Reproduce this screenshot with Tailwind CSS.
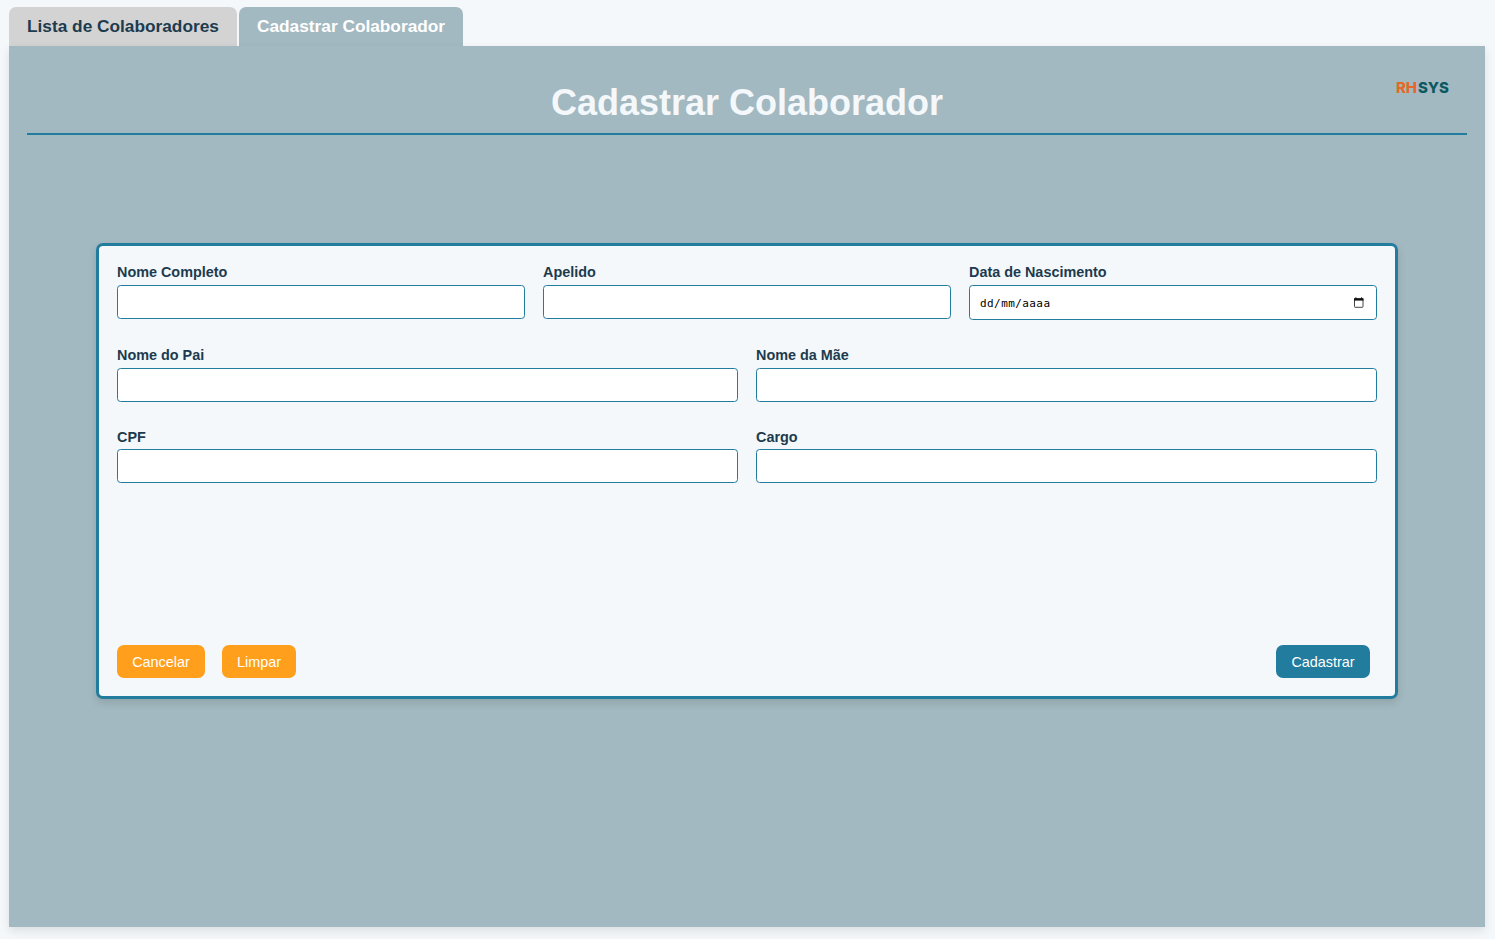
<!DOCTYPE html>
<html lang="pt-BR">
<head>
<meta charset="utf-8">
<title>Cadastrar Colaborador</title>
<script src="https://cdn.jsdelivr.net/npm/@tailwindcss/browser@4"></script>
</head>
<body class="h-screen overflow-hidden bg-[#f4f8fb] pt-[7px] pr-[10px] pb-3 pl-[9px] font-['Liberation_Sans',Arial,sans-serif] text-[#1d3b4e] flex flex-col">
  <nav class="flex gap-[2px] h-[39px] shrink-0 text-[17.28px] font-bold">
    <button class="w-[228px] pl-[18px] text-left whitespace-nowrap rounded-t-[7px] bg-[#d3d3d3]">Lista de Colaboradores</button>
    <button class="w-[224px] pl-[18px] text-left whitespace-nowrap rounded-t-[7px] bg-[#a3b9c1] text-white">Cadastrar Colaborador</button>
  </nav>
  <main class="flex-1 bg-[#a3b9c1] px-[18px] shadow-[0_4px_9px_rgba(0,0,0,0.1)]">
    <header class="relative h-[89px] border-b-2 border-[#227c9d] flex justify-center pt-9">
      <h1 class="text-[36px] leading-[41px] font-bold text-[#f4f8fb]">Cadastrar Colaborador</h1>
      <div class="absolute right-[18px] top-8 w-[53px] h-5 leading-5 text-[15px] font-extrabold font-['Inter',sans-serif] tracking-[-0.1px] text-[#0b5860] whitespace-nowrap"><span class="text-[#e4682a] mr-px">RH</span>SYS</div>
    </header>
    <form class="mt-[108px] mx-auto w-[1302px] h-[456px] rounded-[7px] border-3 border-[#227c9d] bg-[#f4f8fb] px-[18px] pt-[18px] pb-[18px] flex flex-col shadow-[0_4px_9px_rgba(0,0,0,0.12)] text-[14.4px] font-bold">
      <div class="grid grid-cols-3 gap-[18px] h-[83px]">
        <label class="block leading-[17px]"><span class="block h-[21px]">Nome Completo</span><input class="block w-full h-[34px] rounded-[3.6px] border border-[#227c9d] bg-white"></label>
        <label class="block leading-[17px]"><span class="block h-[21px]">Apelido</span><input class="block w-full h-[34px] rounded-[3.6px] border border-[#227c9d] bg-white"></label>
        <div class="leading-[17px]"><span class="block h-[21px]">Data de Nascimento</span>
          <div class="flex items-center justify-between h-[35px] rounded-[3.6px] border border-[#227c9d] bg-white pl-[10px] pr-3 text-black">
            <span class="pt-0.5 font-['DejaVu_Sans_Mono',monospace] font-normal text-[11px] tracking-[0.42px]">dd/mm/aaaa</span>
            <svg class="w-[11px] h-[11px]" viewBox="0 0 11 11" fill="none"><rect x="1.5" y="2" width="8.5" height="8.3" rx=".6" stroke="#444"/><path d="M1 1.2h9.5V3.6H1z" fill="#111"/><path d="M2.9 .3v2M8.6 .3v2" stroke="#111"/></svg>
          </div>
        </div>
      </div>
      <div class="grid grid-cols-2 gap-[18px] h-[82px]">
        <label class="block leading-[17px]"><span class="block h-[21px]">Nome do Pai</span><input class="block w-full h-[34px] rounded-[3.6px] border border-[#227c9d] bg-white"></label>
        <label class="block leading-[17px]"><span class="block h-[21px]">Nome da Mãe</span><input class="block w-full h-[34px] rounded-[3.6px] border border-[#227c9d] bg-white"></label>
      </div>
      <div class="grid grid-cols-2 gap-[18px]">
        <label class="block leading-[17px]"><span class="block h-5">CPF</span><input class="block w-full h-[34px] rounded-[3.6px] border border-[#227c9d] bg-white"></label>
        <label class="block leading-[17px]"><span class="block h-5">Cargo</span><input class="block w-full h-[34px] rounded-[3.6px] border border-[#227c9d] bg-white"></label>
      </div>
      <div class="mt-auto flex gap-[17px] pr-[7px] font-normal text-white">
        <button type="button" class="w-[88px] h-[33px] pt-0.5 rounded-[7px] bg-[#ff9f1c]">Cancelar</button>
        <button type="button" class="w-[74px] h-[33px] pt-0.5 rounded-[7px] bg-[#ff9f1c]">Limpar</button>
        <button type="button" class="ml-auto w-[94px] h-[33px] pt-0.5 rounded-[7px] bg-[#227c9d]">Cadastrar</button>
      </div>
    </form>
  </main>
</body>
</html>
